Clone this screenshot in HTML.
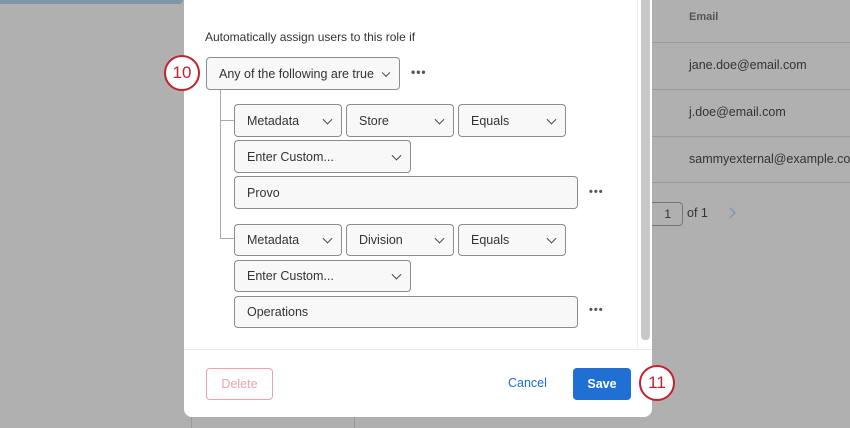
<!DOCTYPE html>
<html><head><style>
*{margin:0;padding:0;box-sizing:border-box}
body{width:850px;height:428px;overflow:hidden;background:#b0b0b0;position:relative;font-family:"Liberation Sans",Arial,sans-serif;color:#333}
.a{position:absolute}
.modal{left:184px;top:-10px;width:468px;height:427px;background:#fff;border-radius:8px}
.box{position:absolute;border:1px solid #8c8c8c;border-radius:4px;background:#f8f8f8;font-size:12.5px;color:#333;padding-left:12px;display:flex;align-items:center}
.chev{position:absolute;right:10px;top:50%;width:7px;height:7px;border-right:1.3px solid #444;border-bottom:1.3px solid #444;transform:translateY(-70%) rotate(45deg)}
.dots{position:absolute;font-size:14px;color:#555;letter-spacing:1px;font-weight:bold}
.circ{position:absolute;width:36px;height:36px;border-radius:50%;border:2.5px solid #c0222f;background:#fff;color:#c0222f;font-size:17px;display:flex;align-items:center;justify-content:center}
.t{position:absolute;font-size:12.5px;color:#333}
.hl{position:absolute;left:638px;width:212px;height:1px;background:#9a9a9a}
</style></head><body>
<div class="a" style="left:0;top:0;width:183px;height:4px;background:#7f96ab;border-radius:0 0 4px 0"></div>
<div class="a" style="left:191px;top:417px;width:1px;height:11px;background:#999"></div>
<div class="a" style="left:354px;top:417px;width:1px;height:11px;background:#999"></div>
<!-- table -->
<div class="t" style="left:689px;top:11px;font-size:11px;font-weight:bold;color:#555">Email</div>
<div class="hl" style="top:42px"></div>
<div class="t" style="left:689px;top:58px">jane.doe@email.com</div>
<div class="hl" style="top:89px"></div>
<div class="t" style="left:689px;top:105px">j.doe@email.com</div>
<div class="hl" style="top:136px"></div>
<div class="t" style="left:689px;top:152px;white-space:nowrap">sammyexternal@example.com</div>
<div class="hl" style="top:182px"></div>
<div class="a" style="left:648px;top:202px;width:35px;height:24px;border:1px solid #777;border-radius:4px;font-size:12px;text-align:right;padding-right:11px;line-height:22px">1</div>
<div class="t" style="left:687px;top:206px">of 1</div>
<div class="a" style="left:726px;top:209px;width:8px;height:8px;border-right:1.5px solid #6f8fb0;border-top:1.5px solid #6f8fb0;transform:rotate(45deg)"></div>

<div class="a modal"></div>
<div class="a" style="left:637px;top:0;width:1px;height:349px;background:#eee"></div>
<div class="a" style="left:641px;top:0;width:9px;height:340px;background:#c8c8c8;border-radius:0 0 4px 4px"></div>
<div class="t" style="left:205px;top:30px;font-size:12px">Automatically assign users to this role if</div>
<div class="box" style="left:206px;top:57px;width:194px;height:33px">Any of the following are true<div class="chev" style="width:6px;height:6px"></div></div>
<div class="dots" style="left:411px;top:65px;font-size:12px">•••</div>
<div class="circ" style="left:164px;top:55px">10</div>
<div class="a" style="left:220px;top:90px;width:1px;height:149px;background:#aaa"></div>
<div class="a" style="left:220px;top:120px;width:14px;height:1px;background:#aaa"></div>
<div class="a" style="left:220px;top:238px;width:14px;height:1px;background:#aaa"></div>

<div class="box" style="left:234px;top:104px;width:108px;height:33px">Metadata<div class="chev"></div></div>
<div class="box" style="left:346px;top:104px;width:108px;height:33px">Store<div class="chev"></div></div>
<div class="box" style="left:458px;top:104px;width:108px;height:33px">Equals<div class="chev"></div></div>
<div class="box" style="left:234px;top:140px;width:177px;height:33px">Enter Custom...<div class="chev"></div></div>
<div class="box" style="left:234px;top:176px;width:344px;height:33px">Provo</div>
<div class="dots" style="left:589px;top:186px;font-size:11px">•••</div>

<div class="box" style="left:234px;top:224px;width:108px;height:32px">Metadata<div class="chev"></div></div>
<div class="box" style="left:346px;top:224px;width:108px;height:32px">Division<div class="chev"></div></div>
<div class="box" style="left:458px;top:224px;width:108px;height:32px">Equals<div class="chev"></div></div>
<div class="box" style="left:234px;top:260px;width:177px;height:32px">Enter Custom...<div class="chev"></div></div>
<div class="box" style="left:234px;top:296px;width:344px;height:32px">Operations</div>
<div class="dots" style="left:589px;top:304px;font-size:11px">•••</div>

<div class="a" style="left:184px;top:349px;width:468px;height:1px;background:#e8e8e8"></div>
<div class="a" style="left:206px;top:368px;width:67px;height:32px;border:1px solid #eaa3a9;border-radius:4px;color:#eca3aa;font-size:12.5px;text-align:center;line-height:30px">Delete</div>
<div class="a" style="left:508px;top:376px;color:#1a6fd0;font-size:12.5px">Cancel</div>
<div class="a" style="left:573px;top:368px;width:58px;height:32px;background:#1f70d2;border-radius:4px;color:#fff;font-size:12.5px;font-weight:bold;text-align:center;line-height:32px">Save</div>
<div class="circ" style="left:639px;top:365px">11</div>
</body></html>
